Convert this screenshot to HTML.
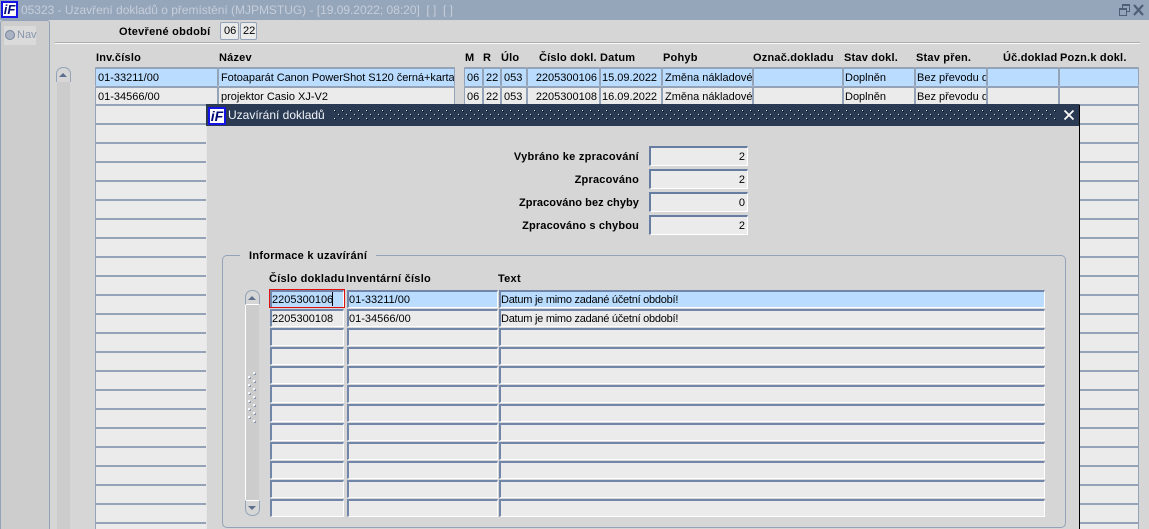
<!DOCTYPE html>
<html lang="cs"><head><meta charset="utf-8"><title>Uzavření dokladů</title>
<style>
html,body{margin:0;padding:0}
body{width:1149px;height:529px;overflow:hidden;position:relative;background:#d6d6d6;font:11px "Liberation Sans",Arial,sans-serif;color:#000}
div{position:absolute;box-sizing:border-box}
.tb{left:0;top:0;width:1149px;height:20px;background:#95a5ba}
.t{white-space:nowrap}
.b{font-weight:bold;letter-spacing:.27px}
.icon{width:18px;height:18px;background:#fff;border:2px solid #1414e6;color:#000a78;font:italic bold 14px/14px "Liberation Sans",sans-serif;letter-spacing:0;text-align:center;overflow:hidden}
.c{top:0;height:19px;background:#ebebeb;border:1px solid #94a3b8;border-top:2px solid #94a3b8;border-bottom:0;padding:3px 0 0 2px;line-height:13px;white-space:nowrap;overflow:hidden;border-radius:1px}
.s .c{background:#b9dcff}
.r{left:0;width:1149px;height:19px}
.h{top:52px;line-height:13px;font-weight:bold;white-space:nowrap;letter-spacing:.2px}
.d{top:0;height:18px;background:#ebebeb;border-top:2px solid #7186a8;border-left:2px solid #7186a8;border-right:1px solid #fff;border-bottom:1px solid #fff;padding:2px 0 0 0;line-height:13px;white-space:nowrap;overflow:hidden}
.s .d{background:#b9dcff}
.x{letter-spacing:-.25px}
.f{left:649px;width:99px;height:20px;background:#ebebeb;border-top:2px solid #667ca0;border-left:2px solid #667ca0;border-right:1px solid #fff;border-bottom:1px solid #fff;text-align:right;padding:3px 2px 0 0;line-height:13px}
.l{right:510px;line-height:13px;font-weight:bold;white-space:nowrap;letter-spacing:.27px}
.p{width:2px;height:2px;background:#f4f6fa;box-shadow:1px 1px 0 #8a98ad}
</style></head><body>
<div class="tb"></div>
<div class="icon" style="left:1px;top:1px;width:17px;height:17px;font-size:13px;line-height:13px">iF</div>
<div class="t" style="left:21px;top:2px;font-size:12px;line-height:16px;color:#c6cedb;letter-spacing:-.02px">05323 - Uzavření dokladů o přemístění (MJPMSTUG) - [19.09.2022; 08:20]&nbsp; [ ]&nbsp; [ ]</div>
<svg style="position:absolute;left:1118px;top:3px" width="30" height="14" viewBox="0 0 30 14"><g fill="none" stroke="#4f5f76" stroke-width="1"><rect x="1.500" y="5.500" width="7" height="7"/><path d="M1.500 6.500h7M4.500 5V1.500h7v7H9M4.500 2.500h7"/></g><path d="M16 2l9 10M25 2l-9 10" stroke="#4f5f76" stroke-width="2.200" fill="none"/></svg>

<div style="left:0;top:20px;width:50px;height:509px;background:#cdcdcd;border-left:1px solid #94a3b8;border-right:1px solid #94a3b8;border-top:1px solid #94a3b8;border-radius:3px 3px 0 0"></div>
<div style="left:4px;top:26px;width:32px;height:19px;background:#dadada"></div>
<div style="left:5px;top:30px;width:10px;height:10px;border-radius:50%;background:#a9b3c2;border:1px solid #74859c"></div>
<div class="t" style="left:17px;top:29px;line-height:13px;color:#8795aa">Nav</div>

<div class="b t" style="left:119px;top:26px;line-height:13px">Otevřené období</div>
<div class="c" style="left:220px;top:22px;width:19px;height:18px;border-width:1px;border-bottom:1px solid #94a3b8;border-radius:2px;padding:2px 0 0 3px;">06</div>
<div class="c" style="left:240px;top:22px;width:17px;height:18px;border-width:1px;border-bottom:1px solid #94a3b8;border-radius:2px;padding:2px 0 0 2px;">22</div>
<div style="left:55px;top:42px;width:1085px;height:2px;background:#fff;border-top:1px solid #a8a8a8;opacity:.9"></div>

<div class="h" style="left:96px">Inv.číslo</div>
<div class="h" style="left:219px">Název</div>
<div class="h" style="left:465px">M</div>
<div class="h" style="left:483px">R</div>
<div class="h" style="left:501px">Úlo</div>
<div class="h" style="left:539px">Číslo dokl.</div>
<div class="h" style="left:600px">Datum</div>
<div class="h" style="left:663px">Pohyb</div>
<div class="h" style="left:753px">Označ.dokladu</div>
<div class="h" style="left:844px">Stav dokl.</div>
<div class="h" style="left:916px">Stav přen.</div>
<div class="h" style="left:1003px">Úč.doklad</div>
<div class="h" style="left:1060px">Pozn.k dokl.</div>

<div style="left:57px;top:82px;width:13px;height:447px;background:#cccccc"></div>
<div style="left:56px;top:67px;width:15px;height:15px;background:#d6d6d6;border:1px solid #94a3b8;border-bottom:0;border-radius:7px 7px 0 0"></div>
<div style="left:59px;top:73px;width:0;height:0;border-left:4.500px solid transparent;border-right:4.500px solid transparent;border-bottom:4px solid #5d6f8c"></div>

<div class="r s" style="top:67px">
<div class="c" style="left:95px;width:123px">01-33211/00</div>
<div class="c" style="left:218px;width:237px;letter-spacing:-.05px">Fotoaparát Canon PowerShot S120 černá+karta</div>
<div class="c" style="left:464px;width:19px">06</div>
<div class="c" style="left:483px;width:18px">22</div>
<div class="c" style="left:501px;width:26px">053</div>
<div class="c" style="left:527px;width:73px;text-align:right;padding:3px 2px 0 0">2205300106</div>
<div class="c" style="left:600px;width:62px;padding-left:1px">15.09.2022</div>
<div class="c" style="left:662px;width:91px">Změna nákladové</div>
<div class="c" style="left:753px;width:90px"></div>
<div class="c" style="left:843px;width:72px;padding-left:1px">Doplněn</div>
<div class="c" style="left:915px;width:72px;padding-left:1px">Bez převodu do</div>
<div class="c" style="left:987px;width:72px"></div>
<div class="c" style="left:1059px;width:80px"></div>
</div>
<div class="r" style="top:86px">
<div class="c" style="left:95px;width:123px">01-34566/00</div>
<div class="c" style="left:218px;width:237px">projektor Casio XJ-V2</div>
<div class="c" style="left:464px;width:19px">06</div>
<div class="c" style="left:483px;width:18px">22</div>
<div class="c" style="left:501px;width:26px">053</div>
<div class="c" style="left:527px;width:73px;text-align:right;padding:3px 2px 0 0">2205300108</div>
<div class="c" style="left:600px;width:62px;padding-left:1px">16.09.2022</div>
<div class="c" style="left:662px;width:91px">Změna nákladové</div>
<div class="c" style="left:753px;width:90px"></div>
<div class="c" style="left:843px;width:72px;padding-left:1px">Doplněn</div>
<div class="c" style="left:915px;width:72px;padding-left:1px">Bez převodu do</div>
<div class="c" style="left:987px;width:72px"></div>
<div class="c" style="left:1059px;width:80px"></div>
</div>

<div style="left:95px;top:104px;width:125px;height:425px;border-left:1px solid #94a3b8;background:repeating-linear-gradient(#94a3b8 0 2px,#ebebeb 2px 19px)"></div>
<div style="left:1060px;top:104px;width:79px;height:425px;border-right:1px solid #94a3b8;background:repeating-linear-gradient(#94a3b8 0 2px,#ebebeb 2px 19px)"></div>

<!-- dialog -->
<div style="left:206px;top:104px;width:874px;height:425px;background:#d6d6d6;border-right:1px solid #000;border-left:1px solid #e6e6e6;border-top:1px solid #d0d0d0"></div>
<div style="left:206px;top:104px;width:873px;height:22px;background:#2a3a52"></div>
<div class="icon" style="left:208px;top:107px">iF</div>
<div class="t" style="left:228px;top:108px;font-size:12px;line-height:15px;color:#f2f5fa">Uzavírání dokladů</div>
<svg style="position:absolute;left:334px;top:109px" width="724" height="13"><defs><pattern id="q" width="8" height="8" patternUnits="userSpaceOnUse"><rect x="0" y="1" width="1" height="1" fill="#d0d6e0"/><rect x="1" y="2" width="1" height="1" fill="#0a0f18"/><rect x="4" y="5" width="1" height="1" fill="#d0d6e0"/><rect x="5" y="6" width="1" height="1" fill="#0a0f18"/></pattern></defs><rect width="724" height="13" fill="url(#q)"/></svg>
<svg style="position:absolute;left:1063px;top:109px" width="12" height="12"><path d="M1.500 1.500l9 9M10.500 1.500l-9 9" stroke="#fff" stroke-width="1.800" fill="none"/></svg>

<div class="l" style="top:151px">Vybráno ke zpracování</div>
<div class="f" style="top:146px">2</div>
<div class="l" style="top:174px;letter-spacing:.2px">Zpracováno</div>
<div class="f" style="top:169px">2</div>
<div class="l" style="top:197px;letter-spacing:.07px">Zpracováno bez chyby</div>
<div class="f" style="top:192px">0</div>
<div class="l" style="top:220px;letter-spacing:.17px">Zpracováno s chybou</div>
<div class="f" style="top:215px">2</div>

<div style="left:222px;top:255px;width:844px;height:273px;border:1px solid #94a3b8;border-radius:5px"></div>
<div style="left:240px;top:250px;width:136px;height:10px;background:#d6d6d6"></div>
<div class="b t" style="left:249px;top:250px;line-height:13px">Informace k uzavírání</div>
<div class="b t" style="left:269px;top:273px;line-height:13px">Číslo dokladu</div>
<div class="b t" style="left:346px;top:273px;line-height:13px">Inventární číslo</div>
<div class="b t" style="left:498px;top:273px;line-height:13px">Text</div>

<div style="left:245px;top:305px;width:14px;height:196px;background:#cccccc;border-left:1px solid #fff"></div>
<div style="left:245px;top:290px;width:15px;height:15px;background:#d6d6d6;border:1px solid #94a3b8;border-bottom:1px solid #fff;border-radius:7px 7px 0 0"></div>
<div style="left:248px;top:296px;width:0;height:0;border-left:4.500px solid transparent;border-right:4.500px solid transparent;border-bottom:4px solid #5d6f8c"></div>
<div style="left:245px;top:500px;width:15px;height:16px;background:#d6d6d6;border:1px solid #94a3b8;border-top:1px solid #fff;border-radius:0 0 7px 7px"></div>
<div style="left:248px;top:506px;width:0;height:0;border-left:4.500px solid transparent;border-right:4.500px solid transparent;border-top:4px solid #5d6f8c"></div>

<div class="p" style="left:253px;top:372px"></div><div class="p" style="left:248px;top:376px"></div>
<div class="p" style="left:253px;top:380px"></div><div class="p" style="left:248px;top:384px"></div>
<div class="p" style="left:253px;top:388px"></div><div class="p" style="left:248px;top:392px"></div>
<div class="p" style="left:253px;top:396px"></div><div class="p" style="left:248px;top:400px"></div>
<div class="p" style="left:253px;top:404px"></div><div class="p" style="left:248px;top:408px"></div>
<div class="p" style="left:253px;top:412px"></div><div class="p" style="left:248px;top:416px"></div>
<div class="p" style="left:253px;top:420px"></div>

<div class="r s" style="top:290px"><div class="d" style="left:270px;width:74px">2205300106</div><div class="d" style="left:347px;width:151px">01-33211/00</div><div class="d x" style="left:499px;width:546px">Datum je mimo zadané účetní období!</div></div>
<div style="left:269px;top:289px;width:76px;height:19px;border:1px solid #e01010"></div>
<div style="left:332px;top:292px;width:1px;height:14px;background:#000"></div>
<div class="r" style="top:309px"><div class="d" style="left:270px;width:74px">2205300108</div><div class="d" style="left:347px;width:151px">01-34566/00</div><div class="d x" style="left:499px;width:546px">Datum je mimo zadané účetní období!</div></div>
<div class="r" style="top:328px"><div class="d" style="left:270px;width:74px"></div><div class="d" style="left:347px;width:151px"></div><div class="d" style="left:499px;width:546px"></div></div>
<div class="r" style="top:347px"><div class="d" style="left:270px;width:74px"></div><div class="d" style="left:347px;width:151px"></div><div class="d" style="left:499px;width:546px"></div></div>
<div class="r" style="top:366px"><div class="d" style="left:270px;width:74px"></div><div class="d" style="left:347px;width:151px"></div><div class="d" style="left:499px;width:546px"></div></div>
<div class="r" style="top:385px"><div class="d" style="left:270px;width:74px"></div><div class="d" style="left:347px;width:151px"></div><div class="d" style="left:499px;width:546px"></div></div>
<div class="r" style="top:404px"><div class="d" style="left:270px;width:74px"></div><div class="d" style="left:347px;width:151px"></div><div class="d" style="left:499px;width:546px"></div></div>
<div class="r" style="top:423px"><div class="d" style="left:270px;width:74px"></div><div class="d" style="left:347px;width:151px"></div><div class="d" style="left:499px;width:546px"></div></div>
<div class="r" style="top:442px"><div class="d" style="left:270px;width:74px"></div><div class="d" style="left:347px;width:151px"></div><div class="d" style="left:499px;width:546px"></div></div>
<div class="r" style="top:461px"><div class="d" style="left:270px;width:74px"></div><div class="d" style="left:347px;width:151px"></div><div class="d" style="left:499px;width:546px"></div></div>
<div class="r" style="top:480px"><div class="d" style="left:270px;width:74px"></div><div class="d" style="left:347px;width:151px"></div><div class="d" style="left:499px;width:546px"></div></div>
<div class="r" style="top:499px"><div class="d" style="left:270px;width:74px"></div><div class="d" style="left:347px;width:151px"></div><div class="d" style="left:499px;width:546px"></div></div>
</body></html>
